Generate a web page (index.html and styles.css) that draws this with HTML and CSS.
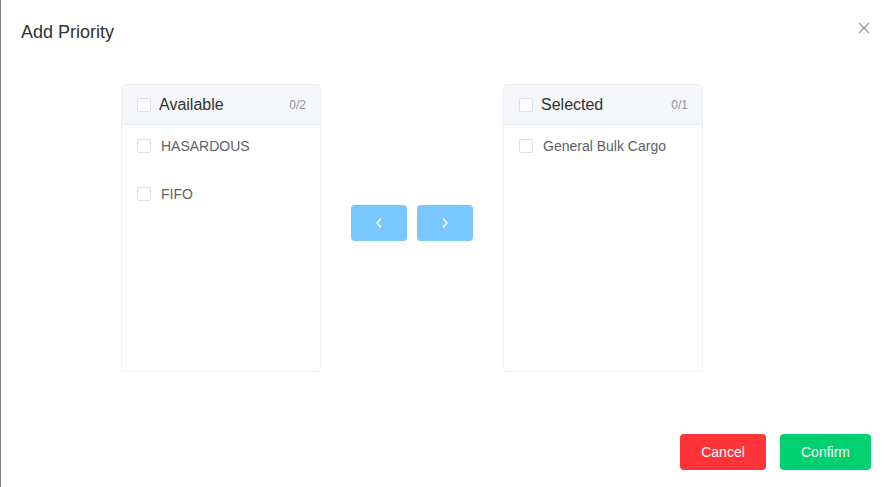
FILE: index.html
```html
<!DOCTYPE html>
<html>
<head>
<meta charset="utf-8">
<link rel="stylesheet" href="styles.css">
</head>
<body>
<div class="dialog">
  <div class="dialog-header">
    <span class="dialog-title">Add Priority</span>
    <button class="close" aria-label="Close">
      <svg width="12" height="12" viewBox="0 0 12 12"><path d="M1 1L11 11M11 1L1 11" stroke="#909399" stroke-width="1.2" fill="none"/></svg>
    </button>
  </div>
  <div class="dialog-body">
    <div class="transfer">
      <div class="panel">
        <div class="panel-header">
          <span class="checkbox"></span>
          <span class="panel-title">Available</span>
          <span class="count">0/2</span>
        </div>
        <div class="panel-list">
          <div class="item"><span class="checkbox"></span><span class="item-label">HASARDOUS</span></div>
          <div class="item"><span class="checkbox"></span><span class="item-label">FIFO</span></div>
        </div>
      </div>
      <div class="buttons">
        <button class="arrow">
          <svg width="8" height="12" viewBox="0 0 8 12"><path d="M6 1.5L2 6L6 10.5" stroke="#fff" stroke-width="1.4" fill="none"/></svg>
        </button>
        <button class="arrow">
          <svg width="8" height="12" viewBox="0 0 8 12"><path d="M2 1.5L6 6L2 10.5" stroke="#fff" stroke-width="1.4" fill="none"/></svg>
        </button>
      </div>
      <div class="panel">
        <div class="panel-header">
          <span class="checkbox"></span>
          <span class="panel-title">Selected</span>
          <span class="count">0/1</span>
        </div>
        <div class="panel-list">
          <div class="item"><span class="checkbox"></span><span class="item-label">General Bulk Cargo</span></div>
        </div>
      </div>
    </div>
  </div>
  <div class="dialog-footer">
    <button class="btn btn-cancel">Cancel</button>
    <button class="btn btn-confirm">Confirm</button>
  </div>
</div>
</body>
</html>
```
FILE: styles.css
```css
* { box-sizing: border-box; }
html, body { margin: 0; padding: 0; background: #fff; }
body { font-family: "Liberation Sans", Arial, sans-serif; }

.dialog {
  width: 891px;
  height: 487px;
  background: #fff;
  border-left: 1px solid #7f7f7f;
  display: flex;
  flex-direction: column;
}

.dialog-header {
  position: relative;
  padding: 20px 20px 0 20px;
  height: 84px;
}
.dialog-title {
  font-size: 18px;
  line-height: 24px;
  color: #303133;
}
.close {
  position: absolute;
  top: 22px;
  right: 21px;
  width: 12px;
  height: 12px;
  padding: 0;
  border: 0;
  background: none;
  display: flex;
}

.dialog-body {
  padding-left: 120px;
}
.transfer {
  display: flex;
  align-items: flex-start;
}
.panel {
  width: 200px;
  height: 288px;
  border: 1px solid #ebeef5;
  border-radius: 4px;
  overflow: hidden;
  background: #fff;
}
.panel-header {
  height: 40px;
  background: #f5f7fa;
  border-bottom: 1px solid #ebeef5;
  display: flex;
  align-items: center;
  padding: 0 14px 0 15px;
}
.checkbox {
  width: 14px;
  height: 14px;
  border: 1px solid #dcdfe6;
  border-radius: 2px;
  background: #fff;
  flex: none;
}
.panel-title {
  margin-left: 8px;
  font-size: 16px;
  color: #303133;
  flex: 1;
}
.count {
  font-size: 12px;
  color: #909399;
}
.panel-list {
  padding-top: 6px;
  display: flex;
  flex-direction: column;
  gap: 18px;
}
.item {
  height: 30px;
  display: flex;
  align-items: center;
  padding-left: 15px;
}
.item-label {
  margin-left: 10px;
  font-size: 14px;
  color: #606266;
}

.buttons {
  display: flex;
  gap: 10px;
  margin: 121px 30px 0 30px;
}
.arrow {
  width: 56px;
  height: 36px;
  border: 0;
  border-radius: 4px;
  background: #78c8ff;
  display: flex;
  align-items: center;
  justify-content: center;
  padding: 0;
}

.dialog-footer {
  margin-top: auto;
  display: flex;
  justify-content: flex-end;
  gap: 14px;
  padding: 0 20px 17px 0;
}
.btn {
  height: 36px;
  padding: 0 20px;
  border: 0;
  border-radius: 4px;
  color: #fff;
  font-family: "Liberation Sans", Arial, sans-serif;
  font-size: 14px;
}
.btn-cancel { background: #ff3338; width: 86px; }
.btn-confirm { background: #00d06f; width: 91px; }
```
